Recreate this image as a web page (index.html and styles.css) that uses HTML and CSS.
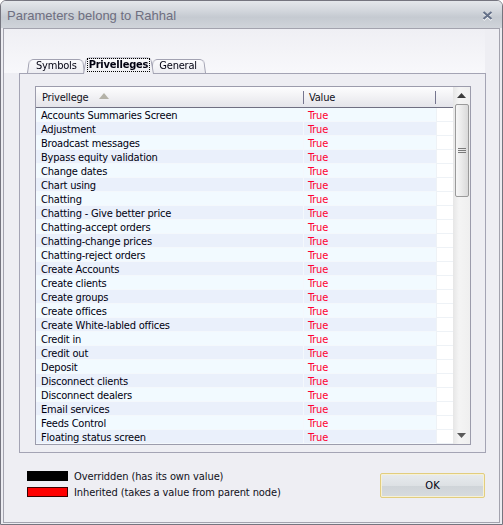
FILE: index.html
```html
<!DOCTYPE html>
<html>
<head>
<meta charset="utf-8">
<link rel="stylesheet" href="styles.css">
</head>
<body>
<div class="window">
  <div class="titlebar">
    <span class="title">Parameters belong to Rahhal</span>
    <svg class="close" width="11" height="10" viewBox="0 0 11 10">
      <path d="M1.5 2 L9.5 9 M9.5 2 L1.5 9" stroke="#ffffff" stroke-width="2.2" fill="none"/>
      <path d="M1.5 1 L9.5 8 M9.5 1 L1.5 8" stroke="#66728a" stroke-width="2.2" fill="none"/>
    </svg>
  </div>
  <div class="client">
    <div class="tabs">
      <div class="tab t1">Symbols</div>
      <div class="tab t2 active"><span class="focus">Privelleges</span></div>
      <div class="tab t3">General</div>
    </div>
    <div class="panel">
      <div class="list">
        <div class="grid">
          <div class="head">
            <div class="hc c1">Privellege <svg class="sort" width="10" height="6" viewBox="0 0 10 6"><path d="M0 6 L5 0 L10 6 Z" fill="#b4b2a8"/></svg></div>
            <div class="hc c2">Value</div>
            <div class="hc c3"></div>
          </div>
          <div class="row"><div class="c1">Accounts Summaries Screen</div><div class="c2">True</div><div class="c3"></div></div>
          <div class="row"><div class="c1">Adjustment</div><div class="c2">True</div><div class="c3"></div></div>
          <div class="row"><div class="c1">Broadcast messages</div><div class="c2">True</div><div class="c3"></div></div>
          <div class="row"><div class="c1">Bypass equity validation</div><div class="c2">True</div><div class="c3"></div></div>
          <div class="row"><div class="c1">Change dates</div><div class="c2">True</div><div class="c3"></div></div>
          <div class="row"><div class="c1">Chart using</div><div class="c2">True</div><div class="c3"></div></div>
          <div class="row"><div class="c1">Chatting</div><div class="c2">True</div><div class="c3"></div></div>
          <div class="row"><div class="c1">Chatting - Give better price</div><div class="c2">True</div><div class="c3"></div></div>
          <div class="row"><div class="c1">Chatting-accept orders</div><div class="c2">True</div><div class="c3"></div></div>
          <div class="row"><div class="c1">Chatting-change prices</div><div class="c2">True</div><div class="c3"></div></div>
          <div class="row"><div class="c1">Chatting-reject orders</div><div class="c2">True</div><div class="c3"></div></div>
          <div class="row"><div class="c1">Create Accounts</div><div class="c2">True</div><div class="c3"></div></div>
          <div class="row"><div class="c1">Create clients</div><div class="c2">True</div><div class="c3"></div></div>
          <div class="row"><div class="c1">Create groups</div><div class="c2">True</div><div class="c3"></div></div>
          <div class="row"><div class="c1">Create offices</div><div class="c2">True</div><div class="c3"></div></div>
          <div class="row"><div class="c1">Create White-labled offices</div><div class="c2">True</div><div class="c3"></div></div>
          <div class="row"><div class="c1">Credit in</div><div class="c2">True</div><div class="c3"></div></div>
          <div class="row"><div class="c1">Credit out</div><div class="c2">True</div><div class="c3"></div></div>
          <div class="row"><div class="c1">Deposit</div><div class="c2">True</div><div class="c3"></div></div>
          <div class="row"><div class="c1">Disconnect clients</div><div class="c2">True</div><div class="c3"></div></div>
          <div class="row"><div class="c1">Disconnect dealers</div><div class="c2">True</div><div class="c3"></div></div>
          <div class="row"><div class="c1">Email services</div><div class="c2">True</div><div class="c3"></div></div>
          <div class="row"><div class="c1">Feeds Control</div><div class="c2">True</div><div class="c3"></div></div>
          <div class="row"><div class="c1">Floating status screen</div><div class="c2">True</div><div class="c3"></div></div>
        </div>
        <div class="scroll">
          <div class="sbtn"><svg width="9" height="5" viewBox="0 0 9 5"><path d="M0 5 L4.5 0 L9 5 Z" fill="#3c3c3c"/></svg></div>
          <div class="thumb"><svg width="8" height="6" viewBox="0 0 8 6"><path d="M0 0.5 H8 M0 2.5 H8 M0 4.5 H8" stroke="#7a7a7a" stroke-width="1"/></svg></div>
          <div class="track"></div>
          <div class="sbtn"><svg width="9" height="5" viewBox="0 0 9 5"><path d="M0 0 L4.5 5 L9 0 Z" fill="#5a5a5a"/></svg></div>
        </div>
      </div>
    </div>
    <div class="footer">
      <div class="legend">
        <div class="leg"><span class="sw black"></span><span>Overridden (has its own value)</span></div>
        <div class="leg"><span class="sw red"></span><span>Inherited (takes a value from parent node)</span></div>
      </div>
      <button class="ok">OK</button>
    </div>
  </div>
</div>
</body>
</html>
```
FILE: styles.css
```css
* { box-sizing: border-box; }
body {
  margin: 0;
  background: #ffffff;
  font-family: "DejaVu Sans Condensed", "Liberation Sans", sans-serif;
  font-size: 11px;
  letter-spacing: -0.2px;
  color: #000010;
}
.window {
  width: 503px;
  height: 525px;
  border: 1px solid #75757f;
  border-radius: 6px 6px 0 0;
  background: #ececf1;
  display: flex;
  flex-direction: column;
}
.titlebar {
  height: 27px;
  flex: none;
  background: linear-gradient(#e4e7eb, #d3d7dd 35%, #c5cad1 60%, #d0d4da);
  border-radius: 5px 5px 0 0;
  display: flex;
  align-items: center;
  justify-content: space-between;
  padding: 2px 9px 0 6px;
}
.title {
  font-family: "Liberation Sans", sans-serif;
  font-size: 13px;
  letter-spacing: 0;
  color: #6e6e80;
}
.close { display: block; margin-top: 1px; }
.client {
  flex: 1;
  margin: 0 2px 1px;
  border: 1px solid #a3a3ae;
  background-color: #eeeef3;
  background-image: linear-gradient(#efeff4, #f8f8fb);
  background-size: calc(100% - 14px) 44px;
  background-repeat: no-repeat;
  padding-top: 27px;
  display: flex;
  flex-direction: column;
}
.tabs {
  display: flex;
  align-items: flex-end;
  height: 17px;
  margin: 0 13px 0 15px;
  padding-left: 9px;
}
.tab {
  position: relative;
  z-index: 1;
  height: 15px;
  line-height: 15px;
  padding: 0 8px;
  color: #000010;
}
.tab::before {
  content: "";
  position: absolute;
  top: 0; bottom: 0; left: -1px; right: -1px;
  border: 1px solid #a2a2b2;
  border-bottom: none;
  border-radius: 5px 5px 0 0;
  background: linear-gradient(#fbfbfd, #ededf2);
  transform: perspective(14px) rotateX(4deg);
  transform-origin: bottom;
  z-index: -1;
}
.t1 { margin-right: 0; padding: 0 7px 0 8px; }
.t3 { padding: 0 8px 0 7px; margin-left: 0; }
.tab.active {
  z-index: 2;
  height: 18px;
  margin-bottom: -1px;
  padding: 3px 3px 0 4px;
  font-weight: bold;
  line-height: 12px;
}
.tab.active::before {
  background: linear-gradient(#fafafc, #eeeef3);
}
.focus {
  display: inline-block;
  outline: 1px dotted #000;
  outline-offset: 0;
  padding: 0 1px;
  line-height: 12px;
}
.panel {
  margin: 0 13px 0 15px;
  border: 1px solid #a4a4b4;
  background: #eeeef3;
  padding: 12px 14px 7px 15px;
}
.list {
  display: flex;
  height: 359px;
  border: 1px solid #9c9cac;
  background: #ffffff;
}
.grid {
  flex: 1;
  display: flex;
  flex-direction: column;
}
.c1 { width: 268px; flex: none; }
.c2 { width: 132px; flex: none; }
.c3 { flex: 1; }
.head {
  display: flex;
  height: 21px;
  background: linear-gradient(#fdfdfe, #f1f1f4 50%, #e4e4ea);
  border-bottom: 1px solid #6f6f82;
}
.hc {
  display: flex;
  align-items: center;
  padding-left: 6px;
  padding-top: 1px;
  color: #101020;
  background: linear-gradient(#75758e, #75758e) right center / 1px 13px no-repeat;
}
.hc.c2 { padding-left: 5px; }
.hc.c3 { background: none; }
.sort { margin-left: 10px; margin-bottom: 3px; }
.row {
  display: flex;
  height: 14px;
}
.row .c1, .row .c2 {
  padding-left: 5px;
  padding-top: 1px;
  line-height: 13px;
  white-space: nowrap;
  border-bottom: 1px solid #f4f8fc;
}
.row .c1 { border-right: 1px solid #f4f8fc; }
.row:nth-child(even) .c1, .row:nth-child(even) .c2 { background: #f2faff; }
.row:nth-child(odd) .c1, .row:nth-child(odd) .c2 { background: #eaf0fb; }
.row .c2 { color: #ff0030; padding-left: 4px; }
.row .c3 {
  background: #ffffff;
  border-bottom: 1px solid #eef2f6;
  border-left: 1px solid #eef2f6;
}
.scroll {
  width: 17px;
  flex: none;
  display: flex;
  flex-direction: column;
  background: linear-gradient(to right, #e6e6e6, #f4f4f4 35%, #efefef);
}
.sbtn {
  height: 17px;
  flex: none;
  display: flex;
  align-items: center;
  justify-content: center;
}
.thumb {
  height: 93px;
  flex: none;
  margin: 0 1px 0 2px;
  border: 1px solid #9a9a9a;
  border-radius: 2px;
  background: linear-gradient(to right, #f7f7f7, #e9e9e9 50%, #d9d9d9);
  display: flex;
  align-items: center;
  justify-content: center;
}
.track { flex: 1; }
.footer {
  display: flex;
  justify-content: space-between;
  align-items: center;
  padding: 15px 14px 0 23px;
}
.legend { display: flex; flex-direction: column; }
.leg {
  display: flex;
  align-items: center;
  height: 16px;
  gap: 6px;
  letter-spacing: -0.1px;
  color: #101020;
}
.sw {
  width: 41px;
  height: 10px;
  border: 1px solid #000;
  background: #000;
}
.sw.red { background: #ff0000; border-color: #3a0000; }
.ok {
  width: 105px;
  height: 25px;
  margin-top: 3px;
  border: 1px solid #e2cd7e;
  border-radius: 2px;
  background: linear-gradient(#e8ebee, #dde1e4 50%, #cfd4d8 52%, #d7dbde);
  box-shadow: inset 0 0 0 1px #f6f1d6;
  font-family: inherit;
  font-size: 11px;
  letter-spacing: 0;
  color: #000010;
  padding: 0;
}
```
